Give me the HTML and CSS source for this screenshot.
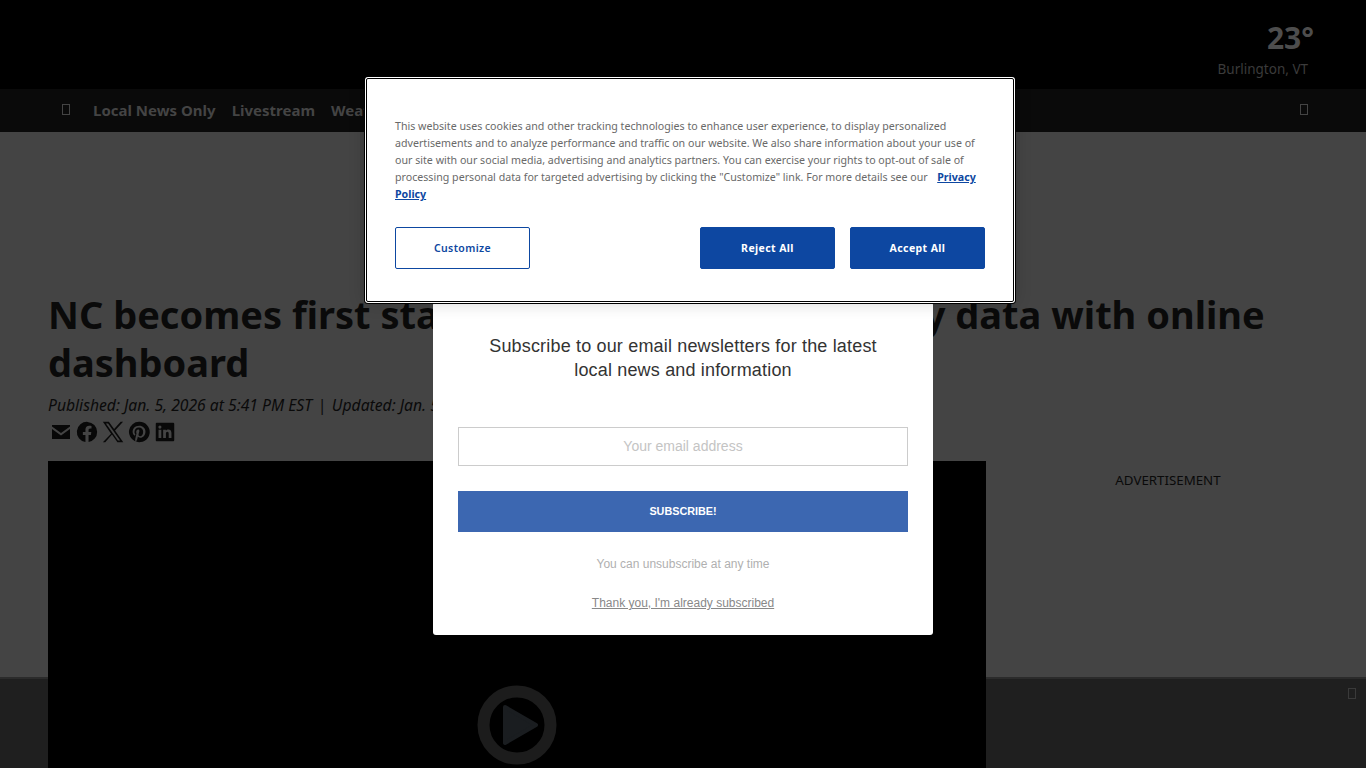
FILE: index.html
```html
<!DOCTYPE html>
<html lang="en">
<head>
<meta charset="utf-8">
<title>NC becomes first state to open infant mortality data with online dashboard</title>
<link rel="stylesheet" href="styles.css">
</head>
<body>
<div class="page">
  <header class="top">
    <div class="weather">
      <div class="temp">23°</div>
      <div class="city">Burlington, VT</div>
    </div>
  </header>
  <nav class="nav">
    <span class="tofu nav-menu"></span>
    <a class="nav-link">Local News Only</a>
    <a class="nav-link">Livestream</a>
    <a class="nav-link">Weather</a>
    <span class="tofu nav-search"></span>
  </nav>
  <main class="content">
    <h1 class="headline">NC becomes first state to open infant mortality data with online dashboard</h1>
    <p class="dates">Published: Jan. 5, 2026 at 5:41 PM EST <span class="dates-sep">|</span> Updated: Jan. 5, 2026 at 6:12 PM EST</p>
    <div class="share">
      <svg class="share-icon" viewBox="0 0 24 24"><path d="M3 5h18v1.500L12 13 3 6.500zM3 9l9 6.500L21 9v10H3z"/></svg>
      <svg class="share-icon" viewBox="-1 -1 26 26"><path d="M23 12a11 11 0 1 0-12.700 10.900v-7.700H7.500V12h2.800V9.600c0-2.800 1.600-4.300 4.100-4.300 1.200 0 2.500.2 2.500.2v2.700h-1.400c-1.400 0-1.800.9-1.800 1.700V12h3l-.5 3.200h-2.500v7.700A11 11 0 0 0 23 12z"/></svg>
      <svg class="share-icon" viewBox="-1 -1 26 26"><path d="M14.200 10.300 22.900 1h-2.600l-7.100 7.800L7.500 1H1l8.900 12.900L1 23h2.600l7.300-8.300L16.800 23h6.300zM4.300 2.800h2.400l13 18.500h-2.400z"/></svg>
      <svg class="share-icon" viewBox="-1 -1 26 26"><path d="M12 1a11 11 0 0 0-4 21.200c-.1-.9-.2-2.200 0-3.100l1.300-5.500s-.3-.7-.3-1.600c0-1.500.9-2.700 2-2.700 1 0 1.400.7 1.400 1.600 0 1-.6 2.400-.9 3.700-.3 1.100.5 2 1.600 2 1.900 0 3.400-2 3.400-5 0-2.600-1.900-4.400-4.500-4.400-3.100 0-4.900 2.300-4.900 4.700 0 .9.400 1.900.8 2.400.1.100.1.200.1.300l-.3 1.200c0 .2-.2.200-.4.100-1.400-.6-2.200-2.600-2.200-4.200 0-3.400 2.500-6.600 7.200-6.600 3.800 0 6.700 2.700 6.700 6.300 0 3.800-2.400 6.800-5.700 6.800-1.100 0-2.200-.6-2.500-1.300l-.7 2.600c-.2.900-.9 2.100-1.300 2.800A11 11 0 1 0 12 1z"/></svg>
      <svg class="share-icon" viewBox="-1 -1 26 26"><path fill-rule="evenodd" d="M3 2h18a1 1 0 0 1 1 1v18a1 1 0 0 1-1 1H3a1 1 0 0 1-1-1V3a1 1 0 0 1 1-1zM5 9.500v9h3v-9zM6.500 5a1.700 1.700 0 1 0 0 3.400 1.700 1.700 0 0 0 0-3.400zM10 9.500v9h3v-4.800c0-1.200.6-2 1.600-2s1.400.8 1.400 2v4.800h3v-5.400c0-2.600-1.400-3.800-3.300-3.800-1.300 0-2.200.6-2.700 1.400V9.500z"/></svg>
    </div>
    <div class="columns">
      <div class="video">
        <svg class="play" viewBox="0 0 80 80"><circle class="play-ring" cx="40" cy="40" r="33.500"/><path class="play-arrow" d="M28 22 59 40 28 58z"/></svg>
      </div>
      <aside class="side">ADVERTISEMENT</aside>
    </div>
  </main>
  <div class="bottom-bar"><span class="tofu bar-close"></span></div>
</div>

<section class="popup">
  <h2 class="popup-title">Subscribe to our email newsletters for the latest local news and information</h2>
  <div class="popup-input">Your email address</div>
  <button class="popup-button">SUBSCRIBE!</button>
  <p class="popup-note">You can unsubscribe at any time</p>
  <a class="popup-dismiss">Thank you, I'm already subscribed</a>
</section>

<section class="cookie">
  <p class="cookie-text">This website uses cookies and other tracking technologies to enhance user experience, to display personalized advertisements and to analyze performance and traffic on our website. We also share information about your use of our site with our social media, advertising and analytics partners. You can exercise your rights to opt-out of sale of processing personal data for targeted advertising by clicking the "Customize" link. For more details see our &nbsp;<a class="cookie-link">Privacy Policy</a></p>
  <div class="cookie-actions">
    <button class="btn btn-outline">Customize</button>
    <div class="cookie-right">
      <button class="btn btn-solid">Reject All</button>
      <button class="btn btn-solid">Accept All</button>
    </div>
  </div>
</section>
</body>
</html>
```
FILE: styles.css
```css
* { box-sizing: border-box; }
html, body { margin: 0; height: 768px; overflow: hidden; }
body { font-family: "Noto Sans", "Open Sans", sans-serif; background: #444; position: relative; }
.page { height: 768px; overflow: hidden; position: relative; background: #444; }
.top { height: 89px; background: #000; display: flex; justify-content: flex-end; padding: 19px 52px 0 0; }
.weather { display: flex; flex-direction: column; align-items: flex-end; }
.temp { color: #4d4d4d; font-size: 30px; font-weight: 700; line-height: 38px; }
.city { color: #3b3b3b; font-size: 13.500px; line-height: 20px; margin: 2px 6px 0 0; }
.nav { height: 43px; background: #0a0a0a; display: flex; align-items: center; padding: 0 58px 2px 62px; }
.nav-link { color: #444; font-size: 15px; font-weight: 700; margin-right: 16px; white-space: nowrap; }
.tofu { display: block; width: 8px; height: 11px; border: 1px solid #444; }
.nav-menu { margin-right: 23px; }
.nav-search { margin-left: auto; }
.content { padding: 0 48px; }
.headline { margin: 158px 0 0; font-size: 38px; line-height: 48px; font-weight: 700; color: #0a0a0a; }
.dates { margin: 7px 0 0; font-size: 15.700px; line-height: 24px; font-style: italic; color: #0a0a0a; }
.dates-sep { margin: 0 1.500px; }
.share { display: flex; gap: 2px; margin-top: 2px; height: 26px; padding-left: 1px; align-items: center; }
.share-icon { width: 24px; height: 24px; fill: #080808; }
.columns { display: flex; margin-top: 16px; }
.video { width: 938px; height: 320px; background: #000; position: relative; flex: none; z-index: 1; }
.play { position: absolute; left: 429px; top: 224px; width: 80px; height: 80px; }
.play-ring { fill: none; stroke: #1c1c1c; stroke-width: 12; }
.play-arrow { fill: #1a1d20; stroke: #1a1d20; stroke-width: 4; stroke-linejoin: round; }
.side { flex: 1; text-align: center; font-size: 13.300px; line-height: 20px; color: #0a0a0a; padding: 9px 0 0 32px; }
.bottom-bar { position: absolute; left: 0; right: 0; bottom: 0; height: 91px; background: #1f1f1f; border-top: 2px solid #2b2b2b; }
.bar-close { position: absolute; right: 10px; top: 9px; border-color: #3a3a3a; }
.popup { position: absolute; left: 433px; top: 302px; width: 500px; height: 333px; background: #fff; border-radius: 3px; padding: 32px 25px 0; text-align: center; font-family: "Liberation Sans", Arial, sans-serif; z-index: 2; }
.popup-title { margin: 0 auto; width: 400px; font-size: 18px; line-height: 24px; font-weight: 400; letter-spacing: .17px; color: #333; }
.popup-input { margin-top: 45px; height: 39px; border: 1px solid #ccc; font-size: 14px; line-height: 37px; color: #c4c4c4; }
.popup-button { display: block; width: 100%; margin-top: 25px; height: 41px; border: 0; background: #3c67b1; color: #fff; font: 700 10.800px/41px "Liberation Sans", Arial, sans-serif; padding: 0; }
.popup-note { margin: 24px 0 0; font-size: 12px; line-height: 16px; color: #b0b0b0; }
.popup-dismiss { display: block; margin-top: 23px; font-size: 12px; line-height: 16px; color: #888; text-decoration: underline; }
.cookie { position: absolute; left: 366px; top: 78px; width: 648px; height: 224px; background: #fff; border: 1px solid #000; box-shadow: 0 0 0 1px #fff, 0 0 0 2px #000, 0 0 18px rgba(0,0,0,.2); border-radius: 2px; padding: 39px 28px 0; z-index: 3; }
.cookie-text { margin: 0; font-size: 10.650px; line-height: 17px; color: #696969; }
.cookie-link { color: #0d47a1; font-weight: 700; text-decoration: underline; margin-left: 4px; }
.cookie-actions { display: flex; justify-content: space-between; margin-top: 24px; }
.cookie-right { display: flex; gap: 15px; }
.btn { width: 135px; height: 42px; border-radius: 2px; font: 700 10.500px/1 "Noto Sans", "Open Sans", sans-serif; letter-spacing: .4px; padding: 0; }
.btn-outline { background: #fff; color: #0d47a1; font-weight: 600; border: 1px solid #0d47a1; }
.btn-solid { background: #0d47a1; color: #fff; border: 1px solid #0d47a1; }
```
